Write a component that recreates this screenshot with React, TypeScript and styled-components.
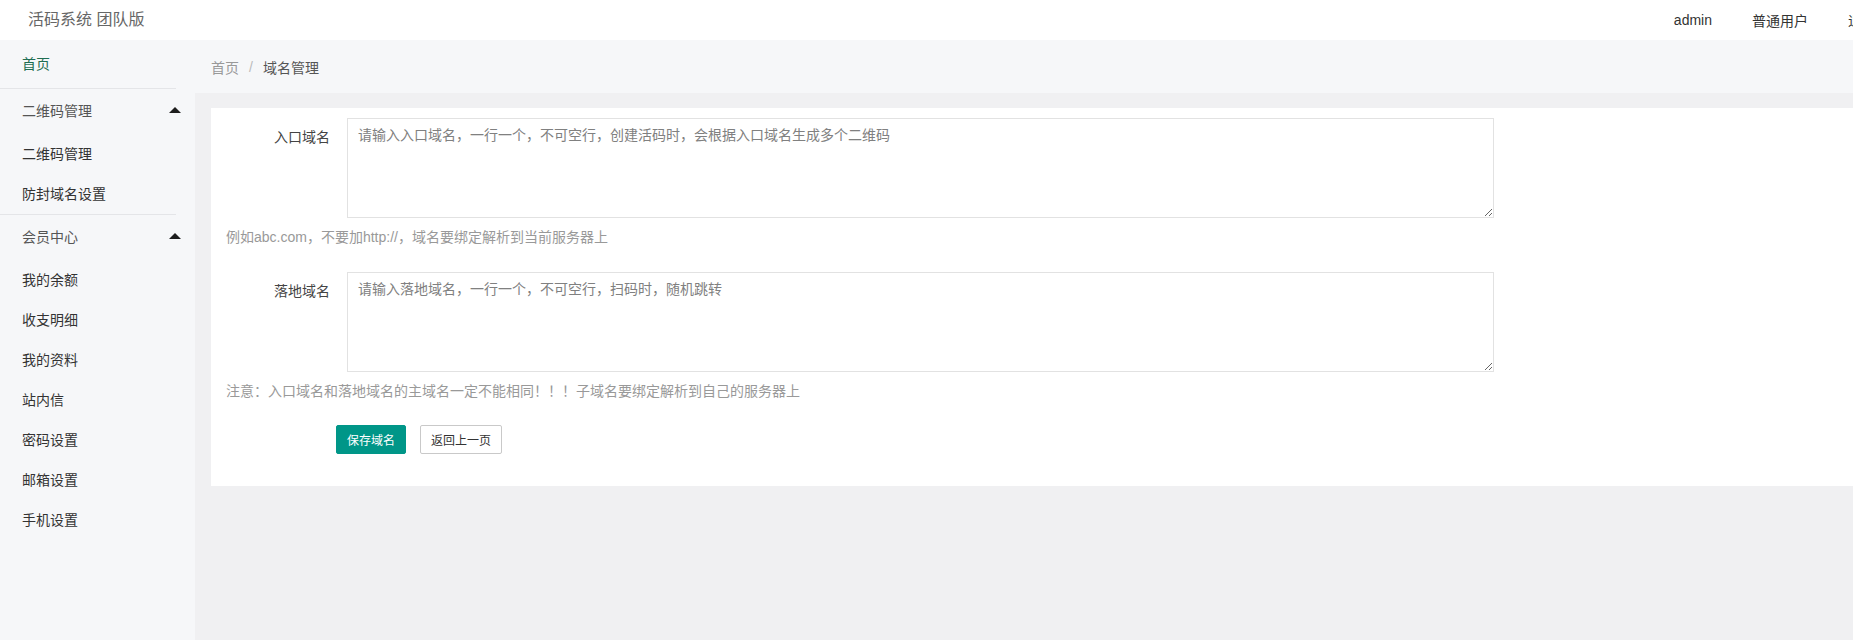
import styled, { createGlobalStyle } from "styled-components";

const GlobalStyle = createGlobalStyle`
  html, body {
    margin: 0;
    padding: 0;
    overflow: hidden;
    background: #f0f0f2;
  }
  body {
    font-family: "Liberation Sans", "Noto Sans CJK SC", sans-serif;
    font-size: 14px;
    color: #333;
  }
  * {
    box-sizing: border-box;
  }
`;

const Page = styled.div`
  width: 1896px;
  min-height: 100vh;
  display: flex;
  flex-direction: column;
`;

const Header = styled.header`
  height: 40px;
  background: #fff;
  display: flex;
  align-items: center;
  justify-content: space-between;
`;

const Logo = styled.div`
  padding-left: 28px;
  font-size: 16px;
  color: #666;
  line-height: 36px;
`;

const TopNav = styled.nav`
  display: flex;
  align-items: center;
  height: 36px;
`;

const TopNavItem = styled.a`
  padding: 0 20px;
  font-size: 14px;
  color: #333;
  text-decoration: none;
`;

const Body = styled.div`
  flex: 1;
  display: flex;
`;

const Sidebar = styled.aside`
  width: 195px;
  flex-shrink: 0;
  background: #f6f7f9;
`;

const HomeLink = styled.a`
  display: block;
  height: 48px;
  line-height: 48px;
  padding-left: 22px;
  color: #1f6e52;
  text-decoration: none;
`;

const Divider = styled.div`
  width: 176px;
  height: 1px;
  background: #e4e5e8;
`;

const GroupTitle = styled.div`
  height: 45px;
  display: flex;
  align-items: center;
  justify-content: space-between;
  padding: 0 14px 3px 22px;
  color: #555;
`;

const Caret = styled.span`
  width: 0;
  height: 0;
  border-left: 6px solid transparent;
  border-right: 6px solid transparent;
  border-bottom: 6px solid #1d1d1d;
`;

const SideItem = styled.a`
  display: block;
  height: 40px;
  line-height: 40px;
  padding-left: 22px;
  color: #333;
  text-decoration: none;
`;

const Main = styled.main`
  flex: 1;
  background: #f0f0f2;
`;

const Breadcrumb = styled.div`
  height: 53px;
  background: #f6f7f9;
  display: flex;
  align-items: center;
  padding-left: 16px;
  font-size: 14px;
`;

const Crumb = styled.span<{ $current?: boolean }>`
  color: ${(p) => (p.$current ? "#555" : "#999")};
`;

const CrumbSep = styled.span`
  color: #bbb;
  margin: 0 10px;
`;

const Card = styled.section`
  margin: 15px 16px 0;
  background: #fff;
  padding: 10px 15px 32px;
`;

const FormRow = styled.div<{ $gap?: number }>`
  display: flex;
  align-items: flex-start;
  margin-top: ${(p) => p.$gap ?? 0}px;
`;

const Label = styled.label`
  width: 121px;
  flex-shrink: 0;
  padding: 9px 17px 0 0;
  text-align: right;
  line-height: 20px;
  color: #444;
`;

const TextArea = styled.textarea`
  width: 1147px;
  height: 100px;
  border: 1px solid #e2e2e2;
  padding: 6px 10px;
  font-family: inherit;
  font-size: 14px;
  line-height: 20px;
  color: #333;
  outline: none;
  &::placeholder {
    color: #808080;
  }
`;

const Hint = styled.div`
  margin-top: 9px;
  line-height: 20px;
  color: #999;
`;

const Actions = styled.div`
  display: flex;
  gap: 14px;
  margin: 24px 0 0 110px;
`;

const Button = styled.button<{ $primary?: boolean }>`
  height: 29px;
  padding: 0 10px;
  font-family: inherit;
  font-size: 12px;
  border-radius: 2px;
  cursor: pointer;
  border: 1px solid ${(p) => (p.$primary ? "#009688" : "#c9c9c9")};
  background: ${(p) => (p.$primary ? "#009688" : "#fff")};
  color: ${(p) => (p.$primary ? "#fff" : "#333")};
`;

const groups = [
  { title: "二维码管理", items: ["二维码管理", "防封域名设置"] },
  {
    title: "会员中心",
    items: ["我的余额", "收支明细", "我的资料", "站内信", "密码设置", "邮箱设置", "手机设置"],
  },
];

export default function App() {
  return (
    <Page>
      <GlobalStyle />
      <Header>
        <Logo>活码系统 团队版</Logo>
        <TopNav>
          <TopNavItem>admin</TopNavItem>
          <TopNavItem>普通用户</TopNavItem>
          <TopNavItem>退出</TopNavItem>
        </TopNav>
      </Header>
      <Body>
        <Sidebar>
          <HomeLink>首页</HomeLink>
          <Divider />
          {groups.map((g, i) => (
            <div key={g.title}>
              <GroupTitle>
                {g.title}
                <Caret />
              </GroupTitle>
              {g.items.map((item) => (
                <SideItem key={item}>{item}</SideItem>
              ))}
              {i === 0 && <Divider />}
            </div>
          ))}
        </Sidebar>
        <Main>
          <Breadcrumb>
            <Crumb>首页</Crumb>
            <CrumbSep>/</CrumbSep>
            <Crumb $current>域名管理</Crumb>
          </Breadcrumb>
          <Card>
            <FormRow>
              <Label>入口域名</Label>
              <TextArea placeholder="请输入入口域名，一行一个，不可空行，创建活码时，会根据入口域名生成多个二维码" />
            </FormRow>
            <Hint>例如abc.com，不要加http://，域名要绑定解析到当前服务器上</Hint>
            <FormRow $gap={25}>
              <Label>落地域名</Label>
              <TextArea placeholder="请输入落地域名，一行一个，不可空行，扫码时，随机跳转" />
            </FormRow>
            <Hint>注意：入口域名和落地域名的主域名一定不能相同！！！子域名要绑定解析到自己的服务器上</Hint>
            <Actions>
              <Button $primary>保存域名</Button>
              <Button>返回上一页</Button>
            </Actions>
          </Card>
        </Main>
      </Body>
    </Page>
  );
}
